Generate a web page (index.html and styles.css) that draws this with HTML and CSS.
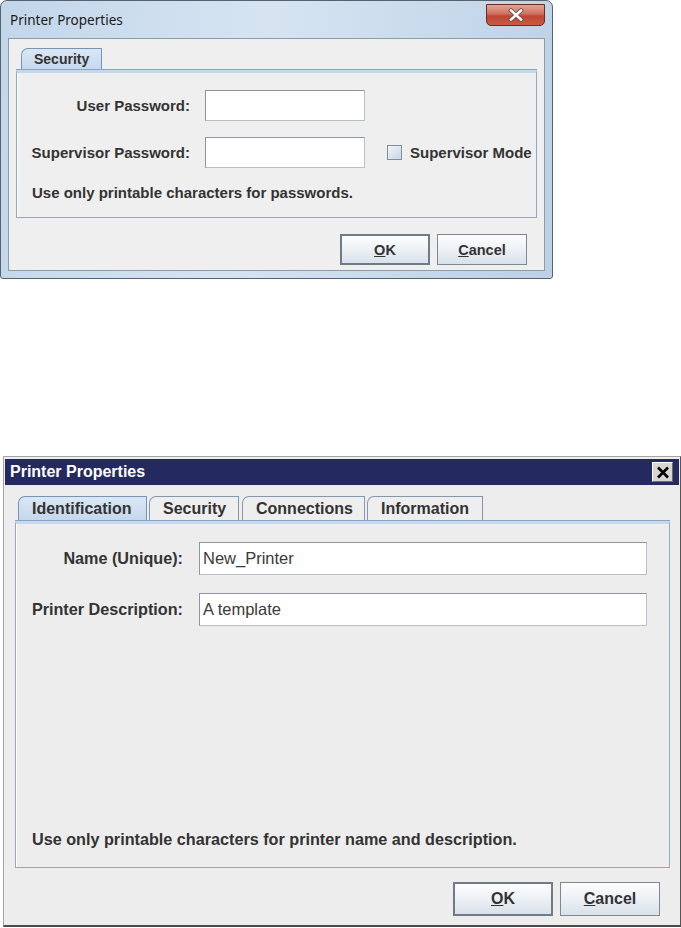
FILE: index.html
```html
<!DOCTYPE html>
<html lang="en">
<head>
    <meta charset="UTF-8">
    <meta name="viewport" content="width=device-width, initial-scale=1.0">
    <title>Printer Properties</title>
    <link rel="stylesheet" href="styles.css">
</head>
<body>
    <!-- Windows 7 style dialog -->
    <div class="aero">
        <div class="aero-title">
            <span class="aero-caption">Printer Properties</span>
            <button class="aero-close" aria-label="Close">
                <svg width="20" height="14" viewBox="0 0 20 14">
                    <path d="M5 2.5 L15 11.5 M15 2.5 L5 11.5" stroke="#6b5550" stroke-width="4.2" stroke-linecap="square"/>
                    <path d="M5 2.5 L15 11.5 M15 2.5 L5 11.5" stroke="#ffffff" stroke-width="2.4" stroke-linecap="square"/>
                </svg>
            </button>
        </div>
        <div class="client client-small">
            <div class="tabs">
                <div class="tab selected">Security</div>
            </div>
            <div class="panel panel-small">
                <div class="form-grid small-grid">
                    <label class="field-label">User Password:</label>
                    <div class="field"></div>
                    <span></span>

                    <label class="field-label">Supervisor Password:</label>
                    <div class="field"></div>
                    <label class="check">
                        <span class="check-box"></span>
                        Supervisor Mode
                    </label>
                </div>
                <p class="note">Use only printable characters for passwords.</p>
            </div>
            <div class="buttons">
                <button class="btn btn-small focused"><u>O</u>K</button>
                <button class="btn btn-small"><u>C</u>ancel</button>
            </div>
        </div>
    </div>

    <!-- Metal style dialog -->
    <div class="metal">
        <div class="metal-title">
            <span class="metal-caption">Printer Properties</span>
            <button class="metal-close" aria-label="Close">
                <svg width="14" height="13" viewBox="0 0 14 13">
                    <path d="M2 1.5 L12 11.5 M12 1.5 L2 11.5" stroke="#000" stroke-width="2.6"/>
                </svg>
            </button>
        </div>
        <div class="metal-body">
            <div class="tabs big-tabs">
                <div class="tab big selected">Identification</div>
                <div class="tab big">Security</div>
                <div class="tab big">Connections</div>
                <div class="tab big">Information</div>
            </div>
            <div class="panel panel-big">
                <div class="form-grid big-grid">
                    <label class="field-label">Name (Unique):</label>
                    <div class="field big-field">New_Printer</div>

                    <label class="field-label">Printer Description:</label>
                    <div class="field big-field">A template</div>
                </div>
                <p class="note big-note">Use only printable characters for printer name and description.</p>
            </div>
            <div class="buttons big-buttons">
                <button class="btn btn-big focused"><u>O</u>K</button>
                <button class="btn btn-big"><u>C</u>ancel</button>
            </div>
        </div>
    </div>
</body>
</html>
```

FILE: styles.css
```css
body {
    margin: 0;
    background-color: #ffffff;
    font-family: "Liberation Sans", Arial, sans-serif;
    color: #333333;
}

/* ---------- Windows 7 frame ---------- */

.aero {
    box-sizing: border-box;
    width: 553px;
    height: 279px;
    border: 1px solid #56636f;
    border-radius: 7px 7px 3px 3px;
    background: linear-gradient(100deg, #c2d6ea 0%, #d6e4f2 45%, #bcd1e6 100%);
    padding: 0 7px 7px 7px;
    display: flex;
    flex-direction: column;
}

.aero-title {
    height: 37px;
    display: flex;
    align-items: flex-start;
    justify-content: space-between;
}

.aero-caption {
    font-family: "Noto Sans", "Open Sans", sans-serif;
    font-size: 13.5px;
    color: #1b1b1b;
    margin-top: 10px;
    margin-left: 2px;
}

.aero-close {
    width: 59px;
    height: 22px;
    margin-top: 3px;
    border: 1px solid #6a2c22;
    border-radius: 0 0 5px 5px;
    background: linear-gradient(#e1a597 0%, #d06f5e 45%, #bd4533 55%, #c95a45 100%);
    display: flex;
    align-items: center;
    justify-content: center;
    padding: 0;
}

.client {
    flex: 1;
    border: 1px solid #8d9aa8;
    background-color: #f0eff0;
    display: flex;
    flex-direction: column;
}

.client-small {
    padding: 9px 7px 5px 7px;
}

/* ---------- tabs ---------- */

.tabs {
    display: flex;
    padding-left: 5px;
    gap: 2px;
}

.tab {
    height: 22px;
    box-sizing: border-box;
    padding: 0 12px;
    border: 1px solid #8497ab;
    border-bottom: none;
    border-top-left-radius: 7px;
    background-color: #efeeef;
    font-weight: bold;
    font-size: 14px;
    line-height: 21px;
    color: #333333;
}

.tab.selected {
    background: linear-gradient(#dbe7f4, #c4d7ec);
    border-color: #7793b6;
}

.big-tabs {
    padding-left: 3px;
}

.tab.big {
    height: 25px;
    font-size: 16px;
    line-height: 24px;
    padding: 0 13px;
}

.tab.big:nth-child(1) { width: 129px; }
.tab.big:nth-child(2) { width: 90px; }
.tab.big:nth-child(3) { width: 123px; margin-left: 1px; }
.tab.big:nth-child(4) { width: 116px; }

/* ---------- panels ---------- */

.panel {
    box-sizing: border-box;
    border: 1px solid #8fa8c6;
    border-top: 3px solid #c6d8ec;
    box-shadow: inset 1px 0 0 #ffffff, 0 -1px 0 #8aa4c4;
    display: flex;
    flex-direction: column;
}

.panel-small {
    height: 148px;
    padding: 17px 0 0 0;
}

.panel-big {
    height: 347px;
    padding: 18px 0 0 0;
}

.form-grid {
    display: grid;
    align-items: center;
}

.small-grid {
    grid-template-columns: 173px 160px auto;
    column-gap: 15px;
    row-gap: 16px;
}

.big-grid {
    grid-template-columns: 167px 448px;
    column-gap: 16px;
    row-gap: 18px;
}

.field-label {
    text-align: right;
    font-weight: bold;
    font-size: 15px;
}

.big-grid .field-label {
    font-size: 16.2px;
}

.field {
    height: 31px;
    box-sizing: border-box;
    background-color: #ffffff;
    border: 1px solid #8a96a4;
    border-right-color: #b7bfc8;
    border-bottom-color: #b7bfc8;
}

.big-field {
    height: 33px;
    padding-left: 3px;
    font-size: 16.5px;
    line-height: 31px;
    color: #3a3a3a;
}

.check {
    display: flex;
    align-items: center;
    gap: 8px;
    margin-left: 7px;
    font-weight: bold;
    font-size: 15px;
}

.check-box {
    width: 13px;
    height: 13px;
    border: 1px solid #7f8fa1;
    background: linear-gradient(135deg, #f2f5f9, #c8d5e4);
}

.note {
    margin: 16px 0 0 15px;
    font-weight: bold;
    font-size: 15px;
}

.big-note {
    margin: auto 0 18px 16px;
    font-size: 16.2px;
}

/* ---------- buttons ---------- */

.buttons {
    display: flex;
    justify-content: flex-end;
    gap: 7px;
    margin-top: auto;
}

.client-small .buttons {
    padding-right: 10px;
}

.btn {
    box-sizing: border-box;
    border: 1px solid #7d8896;
    background: linear-gradient(#fdfdfe 0%, #eef2f6 45%, #d9e1ea 100%);
    font-family: "Liberation Sans", Arial, sans-serif;
    font-weight: bold;
    color: #333333;
    padding: 0;
}

.btn.focused {
    border: 2px solid #6e7b89;
}

.btn-small {
    width: 90px;
    height: 31px;
    font-size: 14.5px;
}

.btn-big {
    width: 100px;
    height: 34px;
    font-size: 16px;
}

/* ---------- Metal frame ---------- */

.metal {
    box-sizing: border-box;
    width: 678px;
    height: 471px;
    margin: 177px 0 0 3px;
    border: 1px solid #a5a5a5;
    border-right-color: #555555;
    border-bottom: 2px solid #4a4a4a;
    padding: 2px 1px 0 1px;
    background-color: #eeedee;
    display: flex;
    flex-direction: column;
}

.metal-title {
    height: 26px;
    background-color: #24295e;
    display: flex;
    align-items: center;
    justify-content: space-between;
    padding: 0 6px 0 5px;
}

.metal-caption {
    color: #ffffff;
    font-weight: bold;
    font-size: 16px;
}

.metal-close {
    width: 21px;
    height: 20px;
    padding: 0;
    border: 1px solid;
    border-color: #ffffff #6a6a6a #6a6a6a #ffffff;
    background-color: #d8d6d2;
    display: flex;
    align-items: center;
    justify-content: center;
}

.metal-body {
    flex: 1;
    display: flex;
    flex-direction: column;
    padding: 11px 9px 9px 10px;
}

.big-buttons {
    padding-right: 10px;
}
```
